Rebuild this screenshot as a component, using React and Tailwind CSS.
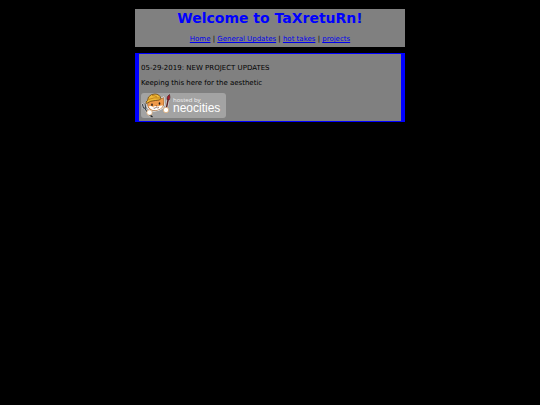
function NeocitiesBadge() {
  return (
    <svg className="block h-[26px] w-[85px]" viewBox="0 0 85 26" role="img" aria-label="Hosted by Neocities">
      <rect x="0" y="0" width="85" height="25" rx="3" fill="#a3a3a3" />
      {/* fork */}
      <path d="M1.500 11.500 2.500 15 5.500 15M4 10.500 4.500 14M3.500 15 8.500 22.500" stroke="#d8d8d8" strokeWidth="2" fill="none" strokeLinecap="round" />
      <path d="M1.500 11.500 2.500 15 5.500 15M4 10.500 4.500 14M3.500 15 8.500 22.500" stroke="#384048" strokeWidth="1.1" fill="none" strokeLinecap="round" />
      {/* brush */}
      <path d="M25 17 27.500 5" stroke="#e6e0e0" strokeWidth="2.800" strokeLinecap="round" />
      <path d="M25 17 27.300 6" stroke="#5b2020" strokeWidth="1.500" />
      <path d="M26 6.500Q25.500 3.500 28.500 1.500Q29.500 4.500 28.400 6.800Z" fill="#a51c2a" stroke="#4a1820" strokeWidth="0.6" />
      {/* head with ear */}
      <path d="M8 8 6.500 11Q6.500 16 11 17.300Q15 18.500 19.500 16Q23.500 13.500 23 9L22.500 4.500 18.500 6.500Z" fill="#ef9a4c" stroke="#fff" strokeWidth="1.800" strokeLinejoin="round" />
      <path d="M8 8 6.500 11Q6.500 16 11 17.300Q15 18.500 19.500 16Q23.500 13.500 23 9L22.500 4.500 18.500 6.500Z" fill="#ef9a4c" stroke="#6b3b14" strokeWidth="0.5" />
      <path d="M7.500 13.500Q10 12.500 12 14Q14 12.500 17 13.500Q20 12 22 12.500Q20.500 16 16 17Q10 18 7.500 13.500Z" fill="#fff" />
      {/* cap */}
      <path d="M5.500 10.500Q4 9 6.500 7.500L7.500 4Q10 0.800 14 1Q18.500 1 20 5.500Q19 7.500 14.500 7.500Q9.500 7.500 5.500 10.500Z" fill="#eeb93a" stroke="#6e4610" strokeWidth="0.8" />
      <path d="M7.500 6.500Q13 4 19 5M11 2.500Q14 2.500 16 4" fill="none" stroke="#b87512" strokeWidth="0.8" />
      {/* face */}
      <ellipse cx="11" cy="11.800" rx="0.800" ry="1.300" fill="#211a18" />
      <ellipse cx="18.500" cy="10.500" rx="0.800" ry="1.300" fill="#211a18" />
      <path d="M14.500 12.500h1.500l-.7 1z" fill="#61301c" />
      <path d="M12.500 15Q14.500 16 15.200 14Q16.500 15.500 18 14.500" fill="none" stroke="#61301c" strokeWidth="0.600" />
      {/* paws */}
      <circle cx="8.500" cy="19.500" r="2.700" fill="#fff" stroke="#dda465" strokeWidth="0.7" />
      <path d="M9.500 22.500 11.500 24" stroke="#222" strokeWidth="1.200" />
      <circle cx="25" cy="17" r="2.700" fill="#fff" stroke="#dda465" strokeWidth="0.7" />
      <text x="32" y="9" fontFamily="'Open Sans', sans-serif" fontSize="6" fill="#f2f2f2">hosted by</text>
      <text x="32" y="19" fontFamily="'Liberation Sans', Arial, sans-serif" fontSize="12" fill="#fff">neocities</text>
    </svg>
  );
}

const links = ["Home", "General Updates", "hot takes", "projects"];

export default function App() {
  return (
    <div className="min-h-screen bg-black pt-[9px] font-['DejaVu_Sans',Verdana,sans-serif] text-[7px] leading-[9px] text-black">
      <div className="mx-auto flex w-1/2 flex-col gap-[6px]">
        <header className="bg-[#808080] pb-[3px] text-center">
          <h1 className="text-[14px] leading-[18px] font-bold text-[#0000ff]">Welcome to TaXretuRn!</h1>
          <nav className="mt-2">
            {links.map((label, i) => (
              <span key={label}>
                {i > 0 && " | "}
                <a href="#" className="text-[#0000ee] underline">{label}</a>
              </span>
            ))}
          </nav>
        </header>
        <main className="border-x-4 border-y border-[#0000ff] bg-[#808080] px-[2px] pt-[10px] pb-[2px]">
          <p>05-29-2019: NEW PROJECT UPDATES</p>
          <p className="mt-[6px]">Keeping this here for the aesthetic</p>
          <a href="#" className="mt-[5px] block w-fit"><NeocitiesBadge /></a>
        </main>
      </div>
    </div>
  );
}
